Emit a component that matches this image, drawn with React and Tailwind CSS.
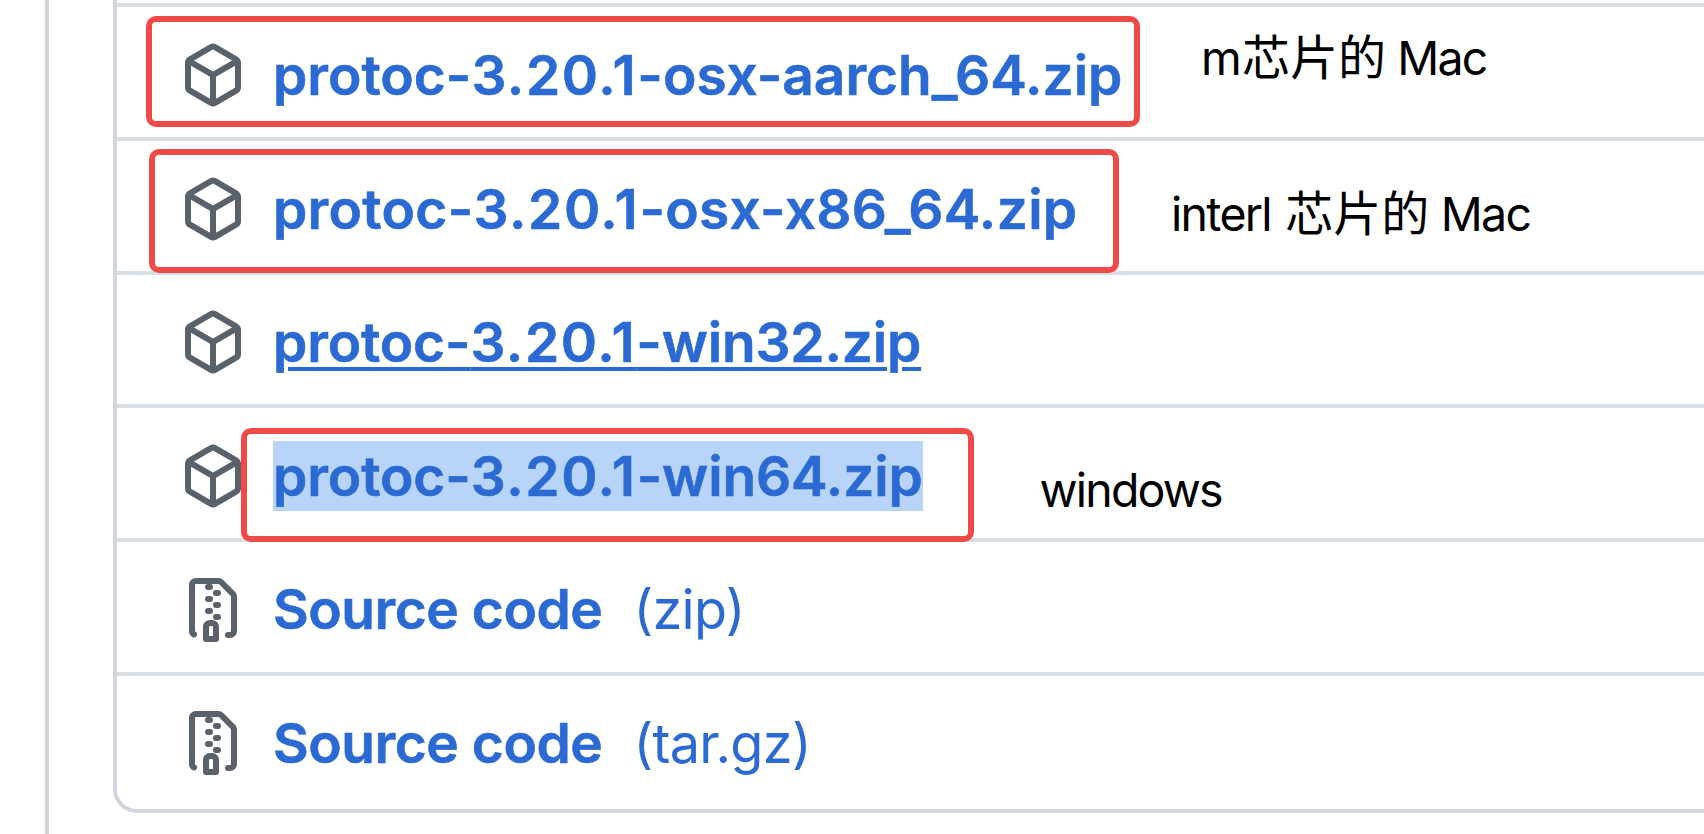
const PackageIcon = () => (
  <svg viewBox="0 0 16 16" className="size-16 shrink-0 fill-[#59616b]">
    <path d="m8.878.392 5.25 3.045c.54.314.872.89.872 1.514v6.098a1.75 1.75 0 0 1-.872 1.514l-5.25 3.045a1.75 1.75 0 0 1-1.756 0l-5.25-3.045A1.75 1.75 0 0 1 1 11.049V4.951c0-.624.332-1.201.872-1.514L7.122.392a1.75 1.75 0 0 1 1.756 0ZM7.875 1.69l-4.63 2.685L8 7.133l4.755-2.758-4.63-2.685a.248.248 0 0 0-.25 0ZM2.5 5.677v5.372c0 .09.047.171.125.216l4.625 2.683V8.432Zm6.25 8.271 4.625-2.683a.25.25 0 0 0 .125-.216V5.677L8.75 8.432Z" />
  </svg>
);

const ZipIcon = () => (
  <svg viewBox="0 0 16 16" className="size-16 shrink-0 fill-[#59616b]">
    <path d="M3.5 1.75v11.5c0 .09.048.173.126.217a.75.75 0 0 1-.752 1.298A1.748 1.748 0 0 1 2 13.25V1.75C2 .784 2.784 0 3.75 0h5.586c.464 0 .909.185 1.237.513l2.914 2.914c.329.328.513.773.513 1.237v8.586A1.75 1.75 0 0 1 12.25 15h-.5a.75.75 0 0 1 0-1.5h.5a.25.25 0 0 0 .25-.25V4.664a.25.25 0 0 0-.073-.177L9.513 1.573a.25.25 0 0 0-.177-.073H7.25a.75.75 0 0 1 0 1.5h-.5a.75.75 0 0 1 0-1.5h-3a.25.25 0 0 0-.25.25Zm3.75 8.75h.5c.966 0 1.75.784 1.75 1.75v3a.75.75 0 0 1-.75.75h-2.5a.75.75 0 0 1-.75-.75v-3c0-.966.784-1.75 1.75-1.75ZM6 5.25a.75.75 0 0 1 .75-.75h.5a.75.75 0 0 1 0 1.5h-.5A.75.75 0 0 1 6 5.25Zm.75 2.25h.5a.75.75 0 0 1 0 1.5h-.5a.75.75 0 0 1 0-1.5ZM8 6.75A.75.75 0 0 1 8.75 6h.5a.75.75 0 0 1 0 1.5h-.5A.75.75 0 0 1 8 6.75ZM8.75 3h.5a.75.75 0 0 1 0 1.5h-.5a.75.75 0 0 1 0-1.5ZM8 9.75A.75.75 0 0 1 8.75 9h.5a.75.75 0 0 1 0 1.5h-.5A.75.75 0 0 1 8 9.75Zm-1 2.5v2.25h1v-2.25a.25.25 0 0 0-.25-.25h-.5a.25.25 0 0 0-.25.25Z" />
  </svg>
);

const assets = [
  { icon: PackageIcon, name: "protoc-3.20.1-osx-aarch_64.zip", style: "tracking-[0px]" },
  { icon: PackageIcon, name: "protoc-3.20.1-osx-x86_64.zip", style: "tracking-[0.3px]" },
  {
    icon: PackageIcon,
    name: "protoc-3.20.1-win32.zip",
    style: "tracking-[-0.15px] underline decoration-4 underline-offset-[5px]",
  },
  { icon: PackageIcon, name: "protoc-3.20.1-win64.zip", style: "bg-[#b8d4f9] tracking-[-0.1px]" },
  { icon: ZipIcon, name: "Source code", kind: "(zip)", style: "tracking-[-0.45px]" },
  { icon: ZipIcon, name: "Source code", kind: "(tar.gz)", style: "tracking-[-0.45px]" },
];

// The version number is set a little wider than the rest of the name.
const spaced = (name) =>
  name.split(/(3\.20\.1)/).map((part, i) =>
    i % 2 ? (
      <span key={i} className="tracking-[1.6px]">
        {part}
      </span>
    ) : (
      part
    ),
  );

function AssetRow({ icon: Icon, name, kind, style }) {
  return (
    <li className="flex h-[133.67px] items-center border-t-4 border-[#d8dee2] pb-px pl-[63.5px] pt-[7px]">
      <Icon />
      <a className="ml-[28.5px] flex items-baseline gap-[31px] leading-[70px] whitespace-nowrap text-[#2b6ad3]">
        <span className={"h-[70px] text-[55px] font-semibold [-webkit-text-stroke:0.6px_#2b6ad3] " + style}>
          {spaced(name)}
        </span>
        {kind && <span className="text-[54px] tracking-[-0.7px]">{kind}</span>}
      </a>
    </li>
  );
}

export default function App() {
  return (
    <div className="relative flex h-[834px] w-[1704px] overflow-hidden bg-white pl-[45px] font-['Inter','Noto_Sans_CJK_SC',sans-serif]">
      <div className="flex grow border-l-4 border-[#d1d6de] pl-16">
        <ul className="h-[813px] grow rounded-bl-[24px] border-b-4 border-l-4 border-[#d1d6de] pt-[3.3px]">
          {assets.map((asset, i) => (
            <AssetRow key={i} {...asset} />
          ))}
        </ul>
      </div>

      <div className="absolute top-[16px] left-[145.5px] h-[111px] w-[994.5px] rounded-[10px] border-6 border-[#ed4a48]" />
      <div className="absolute top-[149px] left-[149px] h-[124px] w-[970px] rounded-[10px] border-6 border-[#ed4a48]" />
      <div className="absolute top-[427.5px] left-[241px] h-[114px] w-[732.5px] rounded-[10px] border-6 border-[#ed4a48]" />

      <p className="absolute top-[28px] left-[1201px] text-[46.5px] leading-[60px] tracking-[-1.8px] whitespace-nowrap text-black">
        m<span className="ml-0.5 text-[48px] tracking-[0px]">芯片的</span> Mac
      </p>
      <p className="absolute top-[184px] left-[1171px] text-[46.5px] leading-[60px] tracking-[-1.7px] whitespace-nowrap text-black">
        interl <span className="ml-[3px] text-[48px] tracking-[0px]">芯片的</span> Mac
      </p>
      <p className="absolute top-[460px] left-[1039.5px] text-[46.5px] leading-[60px] tracking-[-1.8px] whitespace-nowrap text-black">
        windows
      </p>
    </div>
  );
}
